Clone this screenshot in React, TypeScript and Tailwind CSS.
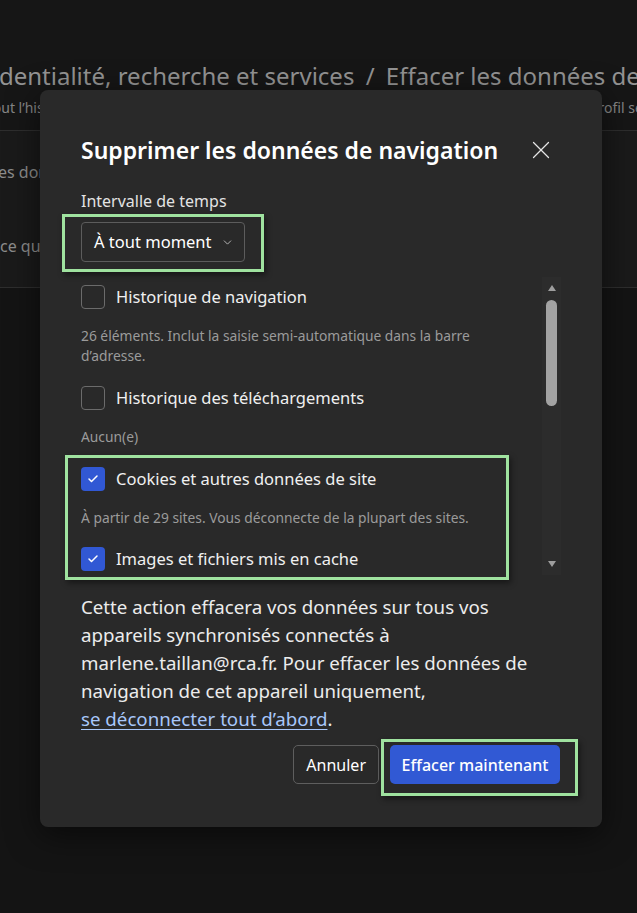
import { X, ChevronDown, Check } from 'lucide-react';

const font = { fontFamily: '"Noto Sans", "Open Sans", sans-serif' };

function Box({ checked }: { checked?: boolean }) {
    return checked ? (
        <div className="w-[24px] h-[24px] rounded-[4px] bg-[#3158d4] flex items-center justify-center shrink-0">
            <Check size={12} strokeWidth={3} className="text-white" />
        </div>
    ) : (
        <div className="w-[24px] h-[24px] rounded-[4px] border border-[#6b6b6b] shrink-0" />
    );
}

function Row({ label, checked }: { label: string; checked?: boolean }) {
    return (
        <div className="flex items-center gap-[11px] h-[24px]">
            <Box checked={checked} />
            <span className="text-[16.5px] text-[#f0f0f0] whitespace-nowrap">{label}</span>
        </div>
    );
}

export default function App() {
    return (
        <div className="relative w-[637px] h-[913px] overflow-hidden bg-[#141414]" style={font}>
            {/* Page behind the dialog */}
            <div className="bg-[#161616] pt-[60px] h-[131px] border-b border-[#2e2e2e]">
                <div className="whitespace-nowrap text-[24px] leading-[32px] text-[#939393] -ml-[60px]">
                    Confidentialité, recherche et services <span className="mx-[5px]">/</span> Effacer les données de navigation
                </div>
                <div className="flex whitespace-nowrap text-[14px] leading-[20px] text-[#858585] mt-[6px]">
                    <div className="w-[590px] overflow-hidden shrink-0">
                        <span className="block -ml-[14px]">Tout l’historique de navigation, les cookies et les données de ce</span>
                    </div>
                    <span>profil seront effacés</span>
                </div>
            </div>
            <div className="bg-[#1a1a1a] h-[157px] border-b border-[#2e2e2e] pt-[29px]">
                <div className="whitespace-nowrap text-[16px] leading-[24px] text-[#8c8c8c] -ml-[2px]">es données de navigation maintenant</div>
                <div className="whitespace-nowrap text-[16px] leading-[24px] text-[#8c8c8c] mt-[50px]">ce que vous souhaitez effacer</div>
            </div>

            {/* Dialog */}
            <div className="absolute left-[40px] top-[90px] w-[562px] rounded-[8px] bg-[#292929] shadow-[0_8px_32px_rgba(0,0,0,0.55)] pt-[44px] pb-[43px] pl-[41px] pr-[41px]">
                <div className="flex items-center justify-between h-[32px]">
                    <h2 className="text-[23px] leading-[32px] font-semibold text-white whitespace-nowrap">Supprimer les données de navigation</h2>
                    <button className="w-[32px] h-[32px] flex items-center justify-center text-[#e6e6e6] mr-[4px]">
                        <X size={30} strokeWidth={1} />
                    </button>
                </div>

                <div className="mt-[25px] text-[16px] leading-[20px] text-[#e3e3e3]">Intervalle de temps</div>
                <button className="mt-[11px] h-[40px] w-[164px] flex items-center gap-[9px] pl-[12px] rounded-[4px] border border-[#5c5c5c] text-[16.5px] text-white">
                    À tout moment
                    <ChevronDown size={13} strokeWidth={1.5} className="text-[#cfcfcf]" />
                </button>

                <div className="mt-[15px] h-[298px] w-full flex">
                    <div className="flex-1 overflow-hidden pt-[8px]">
                        <Row label="Historique de navigation" />
                        <p className="mt-[17px] text-[13.8px] leading-[20px] text-[#9b9b9b]">
                            <span className="block whitespace-nowrap">26 éléments. Inclut la saisie semi-automatique dans la barre</span>
                            <span className="block whitespace-nowrap">d’adresse.</span>
                        </p>
                        <div className="mt-[20px]"><Row label="Historique des téléchargements" /></div>
                        <p className="mt-[17px] text-[13.8px] leading-[20px] text-[#9b9b9b]">Aucun(e)</p>
                        <div className="mt-[20px]"><Row label="Cookies et autres données de site" checked /></div>
                        <p className="mt-[17px] text-[13.8px] leading-[20px] text-[#9b9b9b] whitespace-nowrap">
                            À partir de 29 sites. Vous déconnecte de la plupart des sites.
                        </p>
                        <div className="mt-[19px]"><Row label="Images et fichiers mis en cache" checked /></div>
                    </div>
                    {/* Scrollbar */}
                    <div className="w-[19px] h-full bg-[#2c2c2c] flex flex-col items-center pt-[8px] pb-[8px]">
                        <div className="w-0 h-0 border-l-[4px] border-r-[4px] border-b-[6px] border-l-transparent border-r-transparent border-b-[#9e9e9e]" />
                        <div className="mt-[9px] w-[11px] h-[106px] rounded-full bg-[#a3a3a3]" />
                        <div className="flex-1" />
                        <div className="w-0 h-0 border-l-[4px] border-r-[4px] border-t-[6px] border-l-transparent border-r-transparent border-t-[#9e9e9e]" />
                    </div>
                </div>

                <p className="mt-[18px] text-[18.7px] leading-[28px] text-[#ececec]">
                    <span className="block whitespace-nowrap">Cette action effacera vos données sur tous vos</span>
                    <span className="block whitespace-nowrap">appareils synchronisés connectés à</span>
                    <span className="block whitespace-nowrap">marlene.taillan@rca.fr. Pour effacer les données de</span>
                    <span className="block whitespace-nowrap">navigation de cet appareil uniquement,</span>
                    <span className="block whitespace-nowrap">
                        <a className="text-[#a8c7fa] underline underline-offset-[3px]">se déconnecter tout d’abord</a>.
                    </span>
                </p>

                <div className="mt-[12px] flex justify-end gap-[11px] mr-[1px]">
                    <button className="h-[39px] px-[12px] rounded-[5px] border border-[#5e5e5e] text-[16px] text-white">Annuler</button>
                    <button className="h-[39px] w-[170px] rounded-[5px] bg-[#3159d4] text-[16px] font-medium text-white">Effacer maintenant</button>
                </div>
            </div>

            {/* Annotation highlights */}
            <div className="absolute left-[62px] top-[214px] w-[202px] h-[58px] border-[3px] border-[#9fe29f] shadow-[2px_3px_6px_rgba(0,0,0,0.45)]" />
            <div className="absolute left-[65px] top-[455px] w-[444px] h-[125px] border-[3px] border-[#9fe29f] shadow-[2px_3px_6px_rgba(0,0,0,0.45)]" />
            <div className="absolute left-[381px] top-[739px] w-[197px] h-[57px] border-[3px] border-[#9fe29f] shadow-[2px_3px_6px_rgba(0,0,0,0.45)]" />
        </div>
    );
}
